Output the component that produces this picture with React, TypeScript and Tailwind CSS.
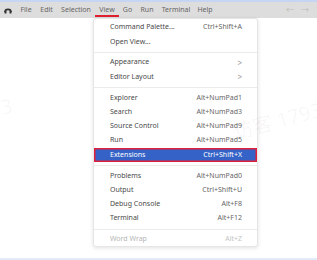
import React from "react";

const font = { fontFamily: '"Noto Sans", "Noto Sans CJK SC", sans-serif' };

type Item = { label: string; sc?: string; arrow?: boolean; hl?: boolean; dis?: boolean } | "sep";

const items: Item[] = [
  { label: "Command Palette...", sc: "Ctrl+Shift+A" },
  { label: "Open View..." },
  "sep",
  { label: "Appearance", arrow: true },
  { label: "Editor Layout", arrow: true },
  "sep",
  { label: "Explorer", sc: "Alt+NumPad1" },
  { label: "Search", sc: "Alt+NumPad3" },
  { label: "Source Control", sc: "Alt+NumPad9" },
  { label: "Run", sc: "Alt+NumPad5" },
  { label: "Extensions", sc: "Ctrl+Shift+X", hl: true },
  "sep",
  { label: "Problems", sc: "Alt+NumPad0" },
  { label: "Output", sc: "Ctrl+Shift+U" },
  { label: "Debug Console", sc: "Alt+F8" },
  { label: "Terminal", sc: "Alt+F12" },
  "sep",
  { label: "Word Wrap", sc: "Alt+Z", dis: true },
];

const menus = [
  { l: "File", w: "w-[20px]" },
  { l: "Edit", w: "w-[21px]" },
  { l: "Selection", w: "w-[38px]" },
  { l: "View", w: "w-[24px]", active: true },
  { l: "Go", w: "w-[17px]" },
  { l: "Run", w: "w-[22px]" },
  { l: "Terminal", w: "w-[36px]" },
  { l: "Help", w: "w-[22px]" },
];

export default function App() {
  return (
    <div className="relative w-[317px] h-[260px] bg-white overflow-hidden flex flex-col" style={font}>
      <div className="h-[2px] bg-[#c5d5f3]" />
      <div className="h-[16px] bg-[#dddddd] flex items-center text-[7px] text-[#666]">
        <div className="w-[16px] flex justify-center">
          <svg width="8" height="7" viewBox="0 0 8 7">
            <path d="M1 5 C1 1.5 7 1.5 7 5" stroke="#333" strokeWidth="1.6" fill="none" />
            <rect x="0.5" y="4" width="2" height="2.5" rx="0.5" fill="#333" />
            <rect x="5.5" y="4" width="2" height="2.5" rx="0.5" fill="#333" />
          </svg>
        </div>
        {menus.map((m) => (
          <div key={m.l} className={`relative ${m.w} h-full flex items-center justify-center`}>
            <span>{m.l}</span>
            {m.active && <div className="absolute left-0 right-0 bottom-[1px] h-[2px] bg-[#e0202e]" />}
          </div>
        ))}
        <div className="flex-1" />
        <div className="flex items-center gap-[7px] pr-[8px] text-[#bdbdbd] text-[8px]">
          <span>←</span>
          <span>→</span>
        </div>
      </div>
      <div className="flex-1" />
      <div className="h-[2px] bg-[#e3ebf8]" />

      <div className="absolute left-[93px] top-[18px] w-[165px] h-[229px] bg-white border border-[#e6e6e6] rounded-[3px] shadow-[0_1px_4px_rgba(0,0,0,0.12)] pt-[1.5px] text-[7px]">
        {items.map((it, i) =>
          it === "sep" ? (
            <div key={i} className="h-[6.5px] flex items-center">
              <div className="w-full h-px bg-[#ebebeb]" />
            </div>
          ) : (
            <div
              key={i}
              className={`h-[14.3px] flex items-center pl-[16px] pr-[15px] ${
                it.hl
                  ? "bg-[#3462c6] text-white shadow-[inset_0_0_0_1.5px_#e0203a]"
                  : it.dis
                  ? "text-[#b5b5b5]"
                  : "text-[#4a4a4a]"
              }`}
            >
              <span className="flex-1">{it.label}</span>
              {it.sc && <span className={it.hl ? "text-white" : it.dis ? "text-[#c4c4c4]" : "text-[#666]"}>{it.sc}</span>}
              {it.arrow && <span className="text-[#999] text-[8px]">&gt;</span>}
            </div>
          )
        )}
      </div>

      <div className="absolute left-[232px] top-[106px] -rotate-[15deg] text-[20px] text-[rgba(0,0,0,0.045)] whitespace-nowrap select-none pointer-events-none">
        访客 1793
      </div>
      <div className="absolute left-[-78px] top-[100px] -rotate-[12deg] text-[20px] text-[rgba(0,0,0,0.045)] whitespace-nowrap select-none pointer-events-none">
        访客 1793
      </div>
    </div>
  );
}
